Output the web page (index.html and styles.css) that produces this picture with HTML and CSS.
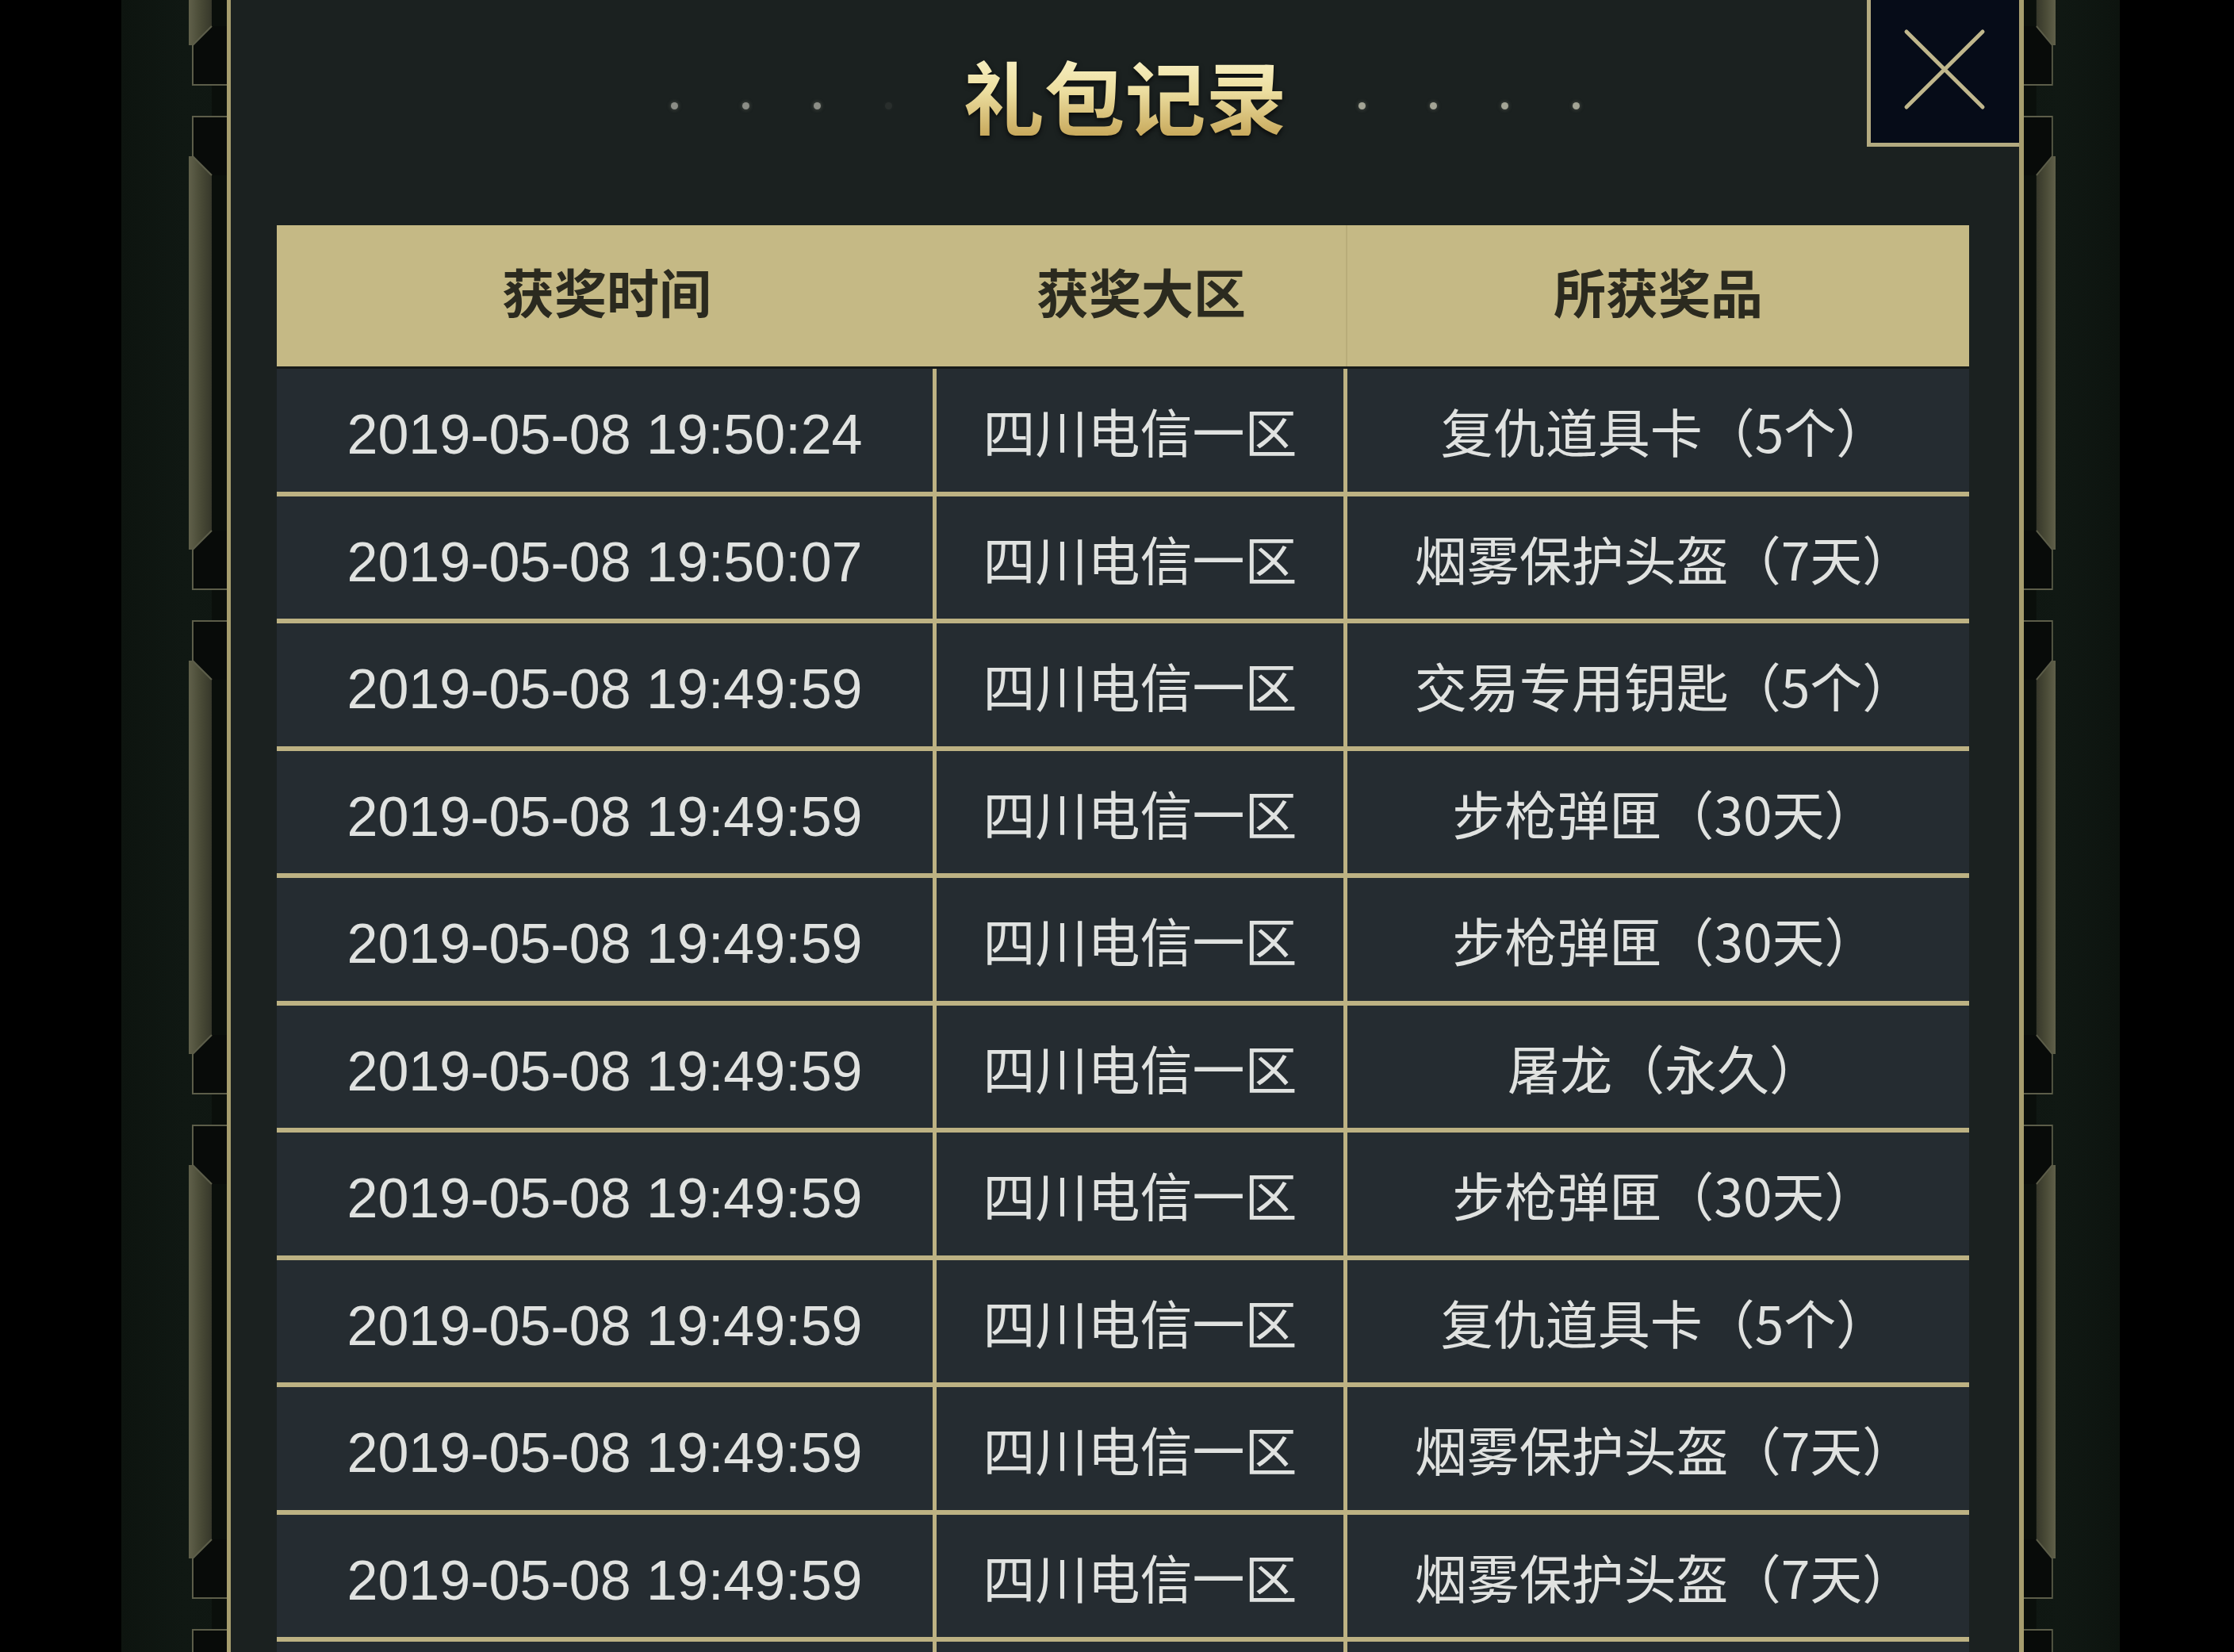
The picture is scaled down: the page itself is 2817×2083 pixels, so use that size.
FILE: index.html
```html
<!DOCTYPE html>
<html lang="zh-CN">
<head>
<meta charset="utf-8">
<title>礼包记录</title>
<link rel="stylesheet" href="styles.css">
</head>
<body>
<div class="screen">
  <div class="void"></div>
  <div class="strip strip-left">
    <svg class="deco" width="48" height="2083" viewBox="0 0 48 2083" preserveAspectRatio="none">
      <defs>
        <linearGradient id="barL" x1="0" x2="1" y1="0" y2="0">
          <stop offset="0" stop-color="#60604a"/>
          <stop offset="0.5" stop-color="#4a4b37"/>
          <stop offset="1" stop-color="#36372a"/>
        </linearGradient>
        <pattern id="clipL" width="48" height="636" patternUnits="userSpaceOnUse" y="-191">
          <rect x="29" y="0" width="19" height="636" fill="#0a0f0b"/>
          <polygon points="0,0 29,0 29,224 5,248 0,248" fill="url(#barL)"/>
          <polygon points="5,248 29,224 48,224 48,298 5,298" fill="#080b09"/>
          <polygon points="5,338 48,338 48,412 29,412 5,388" fill="#080b09"/>
          <polygon points="0,388 5,388 29,412 29,636 0,636" fill="url(#barL)"/>
          <path d="M29 224 L5 248 L5 298 L48 298" fill="none" stroke="#5c5d49" stroke-width="2"/>
          <path d="M48 338 L5 338 L5 388 L29 412" fill="none" stroke="#5c5d49" stroke-width="2"/>
        </pattern>
      </defs>
      <rect width="48" height="2083" fill="url(#clipL)"/>
    </svg>
  </div>

  <div class="panel">
    <div class="title-bar">
      <div class="dots">
        <i class="dot"></i><i class="dot"></i><i class="dot"></i><i class="dot dot-faint"></i>
      </div>
      <h1 class="title">礼包记录</h1>
      <div class="dots">
        <i class="dot dot-bright"></i><i class="dot dot-bright"></i><i class="dot dot-bright"></i><i class="dot dot-bright"></i>
      </div>
    </div>

    <div class="table">
      <div class="thead">
        <div class="th c1">获奖时间</div>
        <div class="th c2">获奖大区</div>
        <div class="th c3">所获奖品</div>
      </div>
      <div class="row"><div class="cell c1">2019-05-08 19:50:24</div><div class="cell c2">四川电信一区</div><div class="cell c3">复仇道具卡（5个）</div></div>
      <div class="row"><div class="cell c1">2019-05-08 19:50:07</div><div class="cell c2">四川电信一区</div><div class="cell c3">烟雾保护头盔（7天）</div></div>
      <div class="row"><div class="cell c1">2019-05-08 19:49:59</div><div class="cell c2">四川电信一区</div><div class="cell c3">交易专用钥匙（5个）</div></div>
      <div class="row"><div class="cell c1">2019-05-08 19:49:59</div><div class="cell c2">四川电信一区</div><div class="cell c3">步枪弹匣（30天）</div></div>
      <div class="row"><div class="cell c1">2019-05-08 19:49:59</div><div class="cell c2">四川电信一区</div><div class="cell c3">步枪弹匣（30天）</div></div>
      <div class="row"><div class="cell c1">2019-05-08 19:49:59</div><div class="cell c2">四川电信一区</div><div class="cell c3">屠龙（永久）</div></div>
      <div class="row"><div class="cell c1">2019-05-08 19:49:59</div><div class="cell c2">四川电信一区</div><div class="cell c3">步枪弹匣（30天）</div></div>
      <div class="row"><div class="cell c1">2019-05-08 19:49:59</div><div class="cell c2">四川电信一区</div><div class="cell c3">复仇道具卡（5个）</div></div>
      <div class="row"><div class="cell c1">2019-05-08 19:49:59</div><div class="cell c2">四川电信一区</div><div class="cell c3">烟雾保护头盔（7天）</div></div>
      <div class="row"><div class="cell c1">2019-05-08 19:49:59</div><div class="cell c2">四川电信一区</div><div class="cell c3">烟雾保护头盔（7天）</div></div>
      <div class="row"><div class="cell c1"></div><div class="cell c2"></div><div class="cell c3"></div></div>
    </div>

    <button class="close" type="button" aria-label="关闭">
      <svg viewBox="0 0 187 180" width="187" height="180">
        <path d="M45 40 L141 135 M141 40 L45 135" stroke="#c0b78c" stroke-width="5" stroke-linecap="round" fill="none"/>
      </svg>
    </button>
  </div>

  <div class="strip strip-right">
    <svg class="deco deco-right" width="40" height="2083" viewBox="0 0 48 2083" preserveAspectRatio="none">
      <rect width="48" height="2083" fill="url(#clipL)"/>
    </svg>
  </div>
  <div class="void void-right"></div>
</div>
</body>
</html>
```

FILE: styles.css
```css
html, body {
  margin: 0;
  padding: 0;
  background: #000;
}
body {
  overflow: hidden;
}
.screen {
  display: flex;
  width: 2817px;
  height: 2083px;
  overflow: hidden;
  background: #000;
}
.void {
  flex: none;
  width: 153px;
  background: #000;
}
.void-right {
  width: 144px;
}
.strip {
  flex: none;
  display: flex;
  background: #0e1611;
}
.strip-left {
  width: 133px;
  justify-content: flex-end;
  background: linear-gradient(90deg, #0d140f 0%, #101813 60%, #0f1712 100%);
}
.strip-right {
  width: 121px;
  justify-content: flex-start;
  background: linear-gradient(90deg, #0f1712 0%, #101813 40%, #0d140f 100%);
}
.deco {
  display: block;
  flex: none;
  height: 2083px;
}
.deco-right {
  width: 40px;
  transform: scaleX(-1);
}
.panel {
  flex: 1;
  min-width: 0;
  position: relative;
  background: #1b2120;
  border-left: 5px solid #a69d6e;
  border-right: 6px solid #a69d6e;
}
.title-bar {
  height: 284px;
  box-sizing: border-box;
  padding-top: 69px;
  display: flex;
  justify-content: center;
  align-items: flex-start;
  gap: 90px;
}
.title {
  margin: 0;
  font-family: "Noto Sans CJK SC", sans-serif;
  font-weight: 700;
  font-size: 102px;
  line-height: 102px;
  background: linear-gradient(180deg, #f8f0c4 0%, #ecdea0 45%, #c8a95c 100%);
  -webkit-background-clip: text;
  background-clip: text;
  color: transparent;
  -webkit-text-fill-color: transparent;
  filter: drop-shadow(0 3px 3px rgba(0, 0, 0, 0.7));
}
.dots {
  display: flex;
  gap: 81px;
  margin-top: 60px;
}
.dot {
  display: block;
  width: 9px;
  height: 9px;
  border-radius: 50%;
  background: #8b8d86;
  box-shadow: 0 0 5px rgba(150, 152, 135, 0.5);
}
.dot-faint {
  opacity: 0.12;
}
.dot-bright {
  background: #a3a495;
}
.table {
  margin-left: 58px;
  width: 2134px;
}
.thead {
  display: flex;
  height: 178px;
  background: #c5b985;
  border-bottom: 3px solid #171b19;
}
.th {
  box-sizing: border-box;
  display: flex;
  align-items: center;
  justify-content: center;
  padding-bottom: 14px;
  font-family: "Noto Sans CJK SC", sans-serif;
  font-weight: 700;
  font-size: 66px;
  line-height: 1;
  color: #2b2a1f;
}
.th.c2 {
  border-right: 2px solid rgba(90, 80, 40, 0.12);
}
.c1 { width: 832px; }
.c2 { width: 518px; }
.c3 { width: 784px; }
.row {
  display: flex;
  height: 154.5px;
  background: #252c31;
  border-bottom: 6px solid #bdb283;
}
.cell {
  box-sizing: border-box;
  display: flex;
  align-items: center;
  justify-content: center;
  color: #e0e2e0;
  font-family: "Noto Sans CJK SC", sans-serif;
  font-weight: 400;
  font-size: 66px;
  line-height: 1;
  white-space: nowrap;
}
.cell.c1 {
  border-right: 5px solid #bdb283;
  padding-top: 12px;
  font-family: "Liberation Sans", "Noto Sans CJK SC", sans-serif;
  font-size: 70px;
}
.cell.c2 {
  border-right: 5px solid #bdb283;
}
.cell.c3 {
  padding-left: 16px;
}
.close {
  position: absolute;
  top: 0;
  right: 0;
  width: 192px;
  height: 185px;
  box-sizing: border-box;
  margin: 0;
  padding: 0;
  border: none;
  border-left: 5px solid #b3aa80;
  border-bottom: 5px solid #b3aa80;
  background: #060c18;
  cursor: pointer;
}
.close svg {
  display: block;
  width: 187px;
  height: 180px;
}
```
